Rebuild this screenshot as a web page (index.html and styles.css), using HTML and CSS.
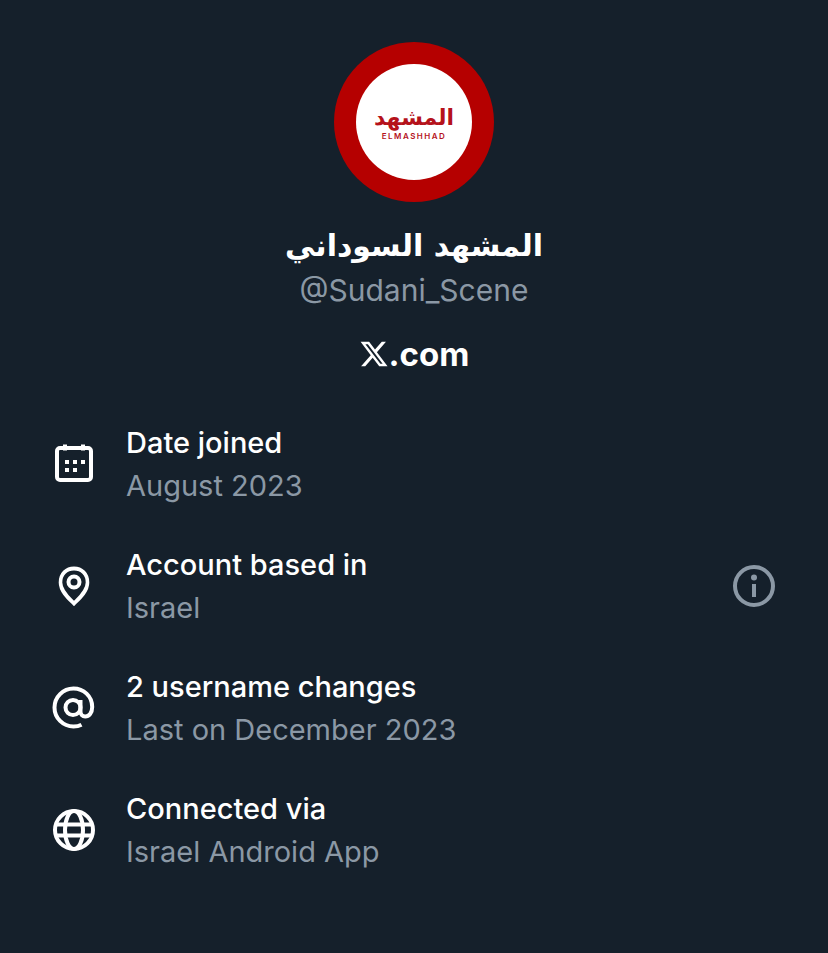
FILE: index.html
```html
<!DOCTYPE html>
<html lang="en">
  <head>
    <title>About this account</title>
    <meta charset="utf-8">
    <link rel="stylesheet" href="styles.css">
  </head>
  <body>

  <div class="header">
    <div class="avatar">
      <div class="avatar-inner">
        <span class="logo-ar" lang="ar" dir="rtl">المشهد</span>
        <span class="logo-en">ELMASHHAD</span>
      </div>
    </div>
    <div class="name" lang="ar" dir="rtl">المشهد السوداني</div>
    <div class="handle">@Sudani_Scene</div>
    <div class="site">
      <svg class="x-logo" viewBox="0 0 24 24"><path d="M18.244 2.25h3.308l-7.227 8.26 8.502 11.24H16.17l-5.214-6.817L4.99 21.75H1.68l7.73-8.835L1.254 2.25H8.08l4.713 6.231zm-1.161 17.52h1.833L7.084 4.126H5.117z"/></svg><span>.com</span>
    </div>
  </div>

  <div class="rows">
    <div class="row">
      <svg class="icon" viewBox="0 0 44 44">
        <rect x="5" y="6" width="34" height="32" rx="3"/>
        <path d="M13 2.5v6M31 2.5v6"/>
        <path class="dots" d="M15 19h4v4h-4zM23 19h4v4h-4zM31 19h4v4h-4zM15 27h4v4h-4zM23 27h4v4h-4z" transform="translate(-2 -1)"/>
      </svg>
      <div class="text">
        <div class="label">Date joined</div>
        <div class="value">August 2023</div>
      </div>
    </div>

    <div class="row">
      <svg class="icon" viewBox="0 0 44 44">
        <path d="M22 39.5 C17 35 7 27.5 7 18.5 C7 10 13.5 4.5 22 4.5 C30.500 4.500 37 10 37 18.500 C37 27.500 27 35 22 39.500 Z" transform="translate(2.200 0) scale(.9 1)"/>
        <circle cx="22" cy="18" r="5.500"/>
      </svg>
      <div class="text">
        <div class="label">Account based in</div>
        <div class="value">Israel</div>
      </div>
      <svg class="icon info" viewBox="0 0 44 44">
        <circle cx="22" cy="22" r="19"/>
        <circle class="dot" cx="22" cy="13.500" r="3"/>
        <path d="M22 20v13"/>
      </svg>
    </div>

    <div class="row">
      <svg class="icon" viewBox="0 0 44 44">
        <circle cx="21" cy="21.500" r="7.500"/>
        <path d="M28.500 14v11.500c0 3 2 5 4.700 5 3.800 0 7-3.600 7-9.500C40.200 10 31.500 2.500 21.500 2.500 11 2.500 2.500 11 2.500 21.500S11 40.500 21.500 40.500c3 0 5.500-.5 8-1.800"/>
      </svg>
      <div class="text">
        <div class="label">2 username changes</div>
        <div class="value">Last on December 2023</div>
      </div>
    </div>

    <div class="row">
      <svg class="icon" viewBox="0 0 44 44">
        <circle cx="22" cy="22" r="19"/>
        <ellipse cx="22" cy="22" rx="9" ry="19"/>
        <path d="M3 16.500h38M3 27.500h38"/>
      </svg>
      <div class="text">
        <div class="label">Connected via</div>
        <div class="value">Israel Android App</div>
      </div>
    </div>
  </div>

  </body>
</html>
```

FILE: styles.css
```css
html {
  height: 100%;
}
body {
  margin: 0;
  padding: 42px 0 0;
  background: #15202b;
  color: #ffffff;
  font-family: Inter, "DejaVu Sans", sans-serif;
  height: 100%;
  box-sizing: border-box;
  overflow: hidden;
}

.header {
  display: flex;
  flex-direction: column;
  align-items: center;
}

.avatar {
  width: 160px;
  height: 160px;
  border-radius: 50%;
  background: #b50000;
  display: flex;
  align-items: center;
  justify-content: center;
}
.avatar-inner {
  width: 116px;
  height: 116px;
  border-radius: 50%;
  background: #ffffff;
  display: flex;
  flex-direction: column;
  align-items: center;
  justify-content: center;
  color: #b5121b;
}
.logo-ar {
  font: bold 22px/26px "DejaVu Sans", sans-serif;
  margin-top: 2px;
}
.logo-en {
  font: 600 8px/10px Inter, sans-serif;
  letter-spacing: 1.5px;
}

.name {
  margin-top: 24px;
  font: bold 30px/40px "DejaVu Sans", sans-serif;
}
.handle {
  margin-top: 4px;
  font-size: 30px;
  line-height: 40px;
  color: #8b98a5;
}
.site {
  margin-top: 24px;
  display: flex;
  align-items: center;
  font-size: 33px;
  font-weight: 700;
  line-height: 40px;
}
.x-logo {
  width: 30px;
  height: 30px;
  fill: #ffffff;
}

.rows {
  margin-top: 47px;
  padding: 0 52px;
  display: flex;
  flex-direction: column;
  gap: 36px;
}
.row {
  display: flex;
  align-items: center;
  gap: 30px;
}
.icon {
  width: 44px;
  height: 44px;
  flex: none;
  fill: none;
  stroke: #ffffff;
  stroke-width: 4;
}
.icon .dots {
  fill: #ffffff;
  stroke: none;
}
.text {
  flex: 1;
}
.label {
  font-size: 29px;
  font-weight: 500;
  line-height: 43px;
}
.value {
  font-size: 29px;
  line-height: 43px;
  color: #8b98a5;
}
.info {
  stroke: #8b98a5;
}
.info .dot {
  fill: #8b98a5;
  stroke: none;
}
```
